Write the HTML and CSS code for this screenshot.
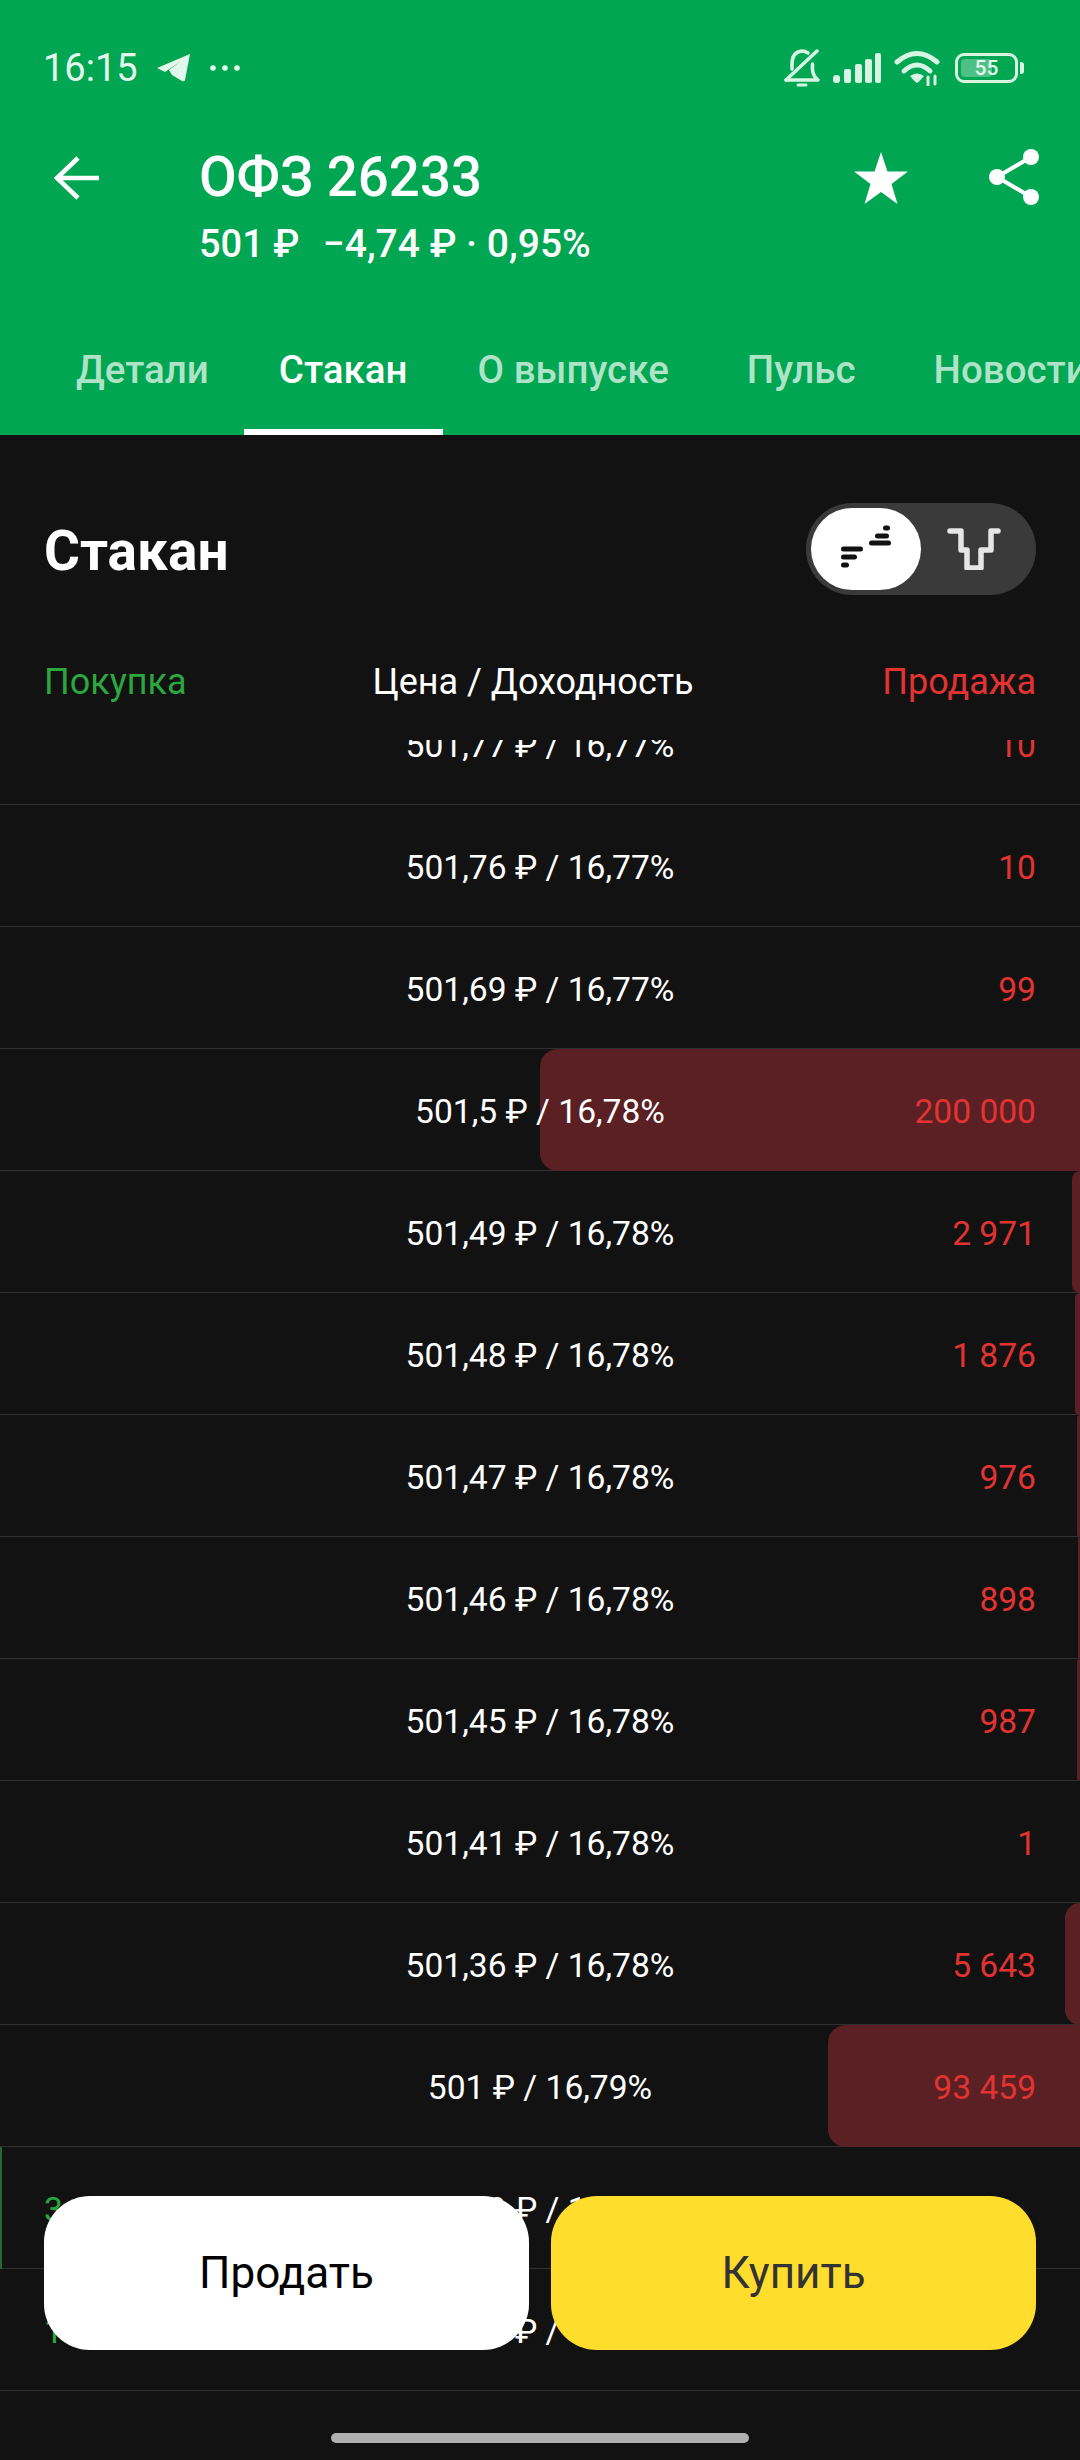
FILE: index.html
```html
<!DOCTYPE html>
<html lang="ru">
<head>
  <meta charset="UTF-8" />
  <title>ОФЗ 26233</title>
  <link rel="stylesheet" href="styles.css">
</head>
<body>
<div class="page">

  <header class="header">
    <div class="statusbar">
      <span class="time">16:15</span>
      <svg class="tg" width="33" height="28" viewBox="0 0 33 28"><path d="M0 14 33 0 28 26Q27.500 28 25 27L15 21 12 16 24 7 8 18Z" fill="#e3f7ec"/></svg>
      <svg class="dots" width="30" height="6" viewBox="0 0 30 6"><g fill="#e3f7ec"><circle cx="3" cy="3" r="2.800"/><circle cx="15" cy="3" r="2.800"/><circle cx="27" cy="3" r="2.800"/></g></svg>
      <div class="status-icons">
        <svg width="36" height="38" viewBox="0 0 36 38" fill="none" stroke="#d8f5e4" stroke-width="3.500" stroke-linecap="round" stroke-linejoin="round">
          <path d="M2 31H34Q29 27 28.500 21V15M24 4Q21 2 18 2 8 3 8 15V20"/>
          <path d="M2 31 33 2"/>
          <path d="M14 36H22" stroke-width="3"/>
        </svg>
        <svg width="48" height="30" viewBox="0 0 48 30" fill="#d8f5e4"><rect y="22" width="7" height="8" rx="3"/><rect x="11" y="16" width="7" height="14" rx="2"/><rect x="22" y="11" width="7" height="19" rx="2"/><rect x="32" y="6" width="7" height="24" rx="2"/><rect x="42" width="6" height="30" rx="2"/></svg>
        <svg width="46" height="36" viewBox="0 0 46 36" fill="none" stroke="#d8f5e4" stroke-width="5" stroke-linecap="round">
          <path d="M3 12Q23-5 43 12"/>
          <path d="M10 21Q23 9 36 21"/>
          <path d="M16 26Q23 21 30 26 24 33 23 33 22 33 16 26Z" fill="#d8f5e4" stroke="none"/>
          <path d="M34 27V35M41 26V34" stroke-width="3"/>
        </svg>
        <div class="battery">
          <div class="battery-body"><span class="battery-fill"></span><span class="battery-num">55</span></div>
          <span class="battery-nub"></span>
        </div>
      </div>
    </div>

    <div class="appbar">
      <svg class="back" width="46" height="44" viewBox="0 0 46 44" fill="none" stroke="#fff" stroke-width="4.500"><path d="M45 22H4M24 2 3 22 24 42"/></svg>
      <div class="title-block">
        <div class="title">ОФЗ 26233</div>
        <div class="subtitle">501 ₽ <span class="change">−4,74 ₽ · 0,95%</span></div>
      </div>
      <svg class="star" width="54" height="52" viewBox="0 0 54 52"><path d="M27 0 33.500 19.500H54L37.500 32 43.500 52 27 40 10.500 52 16.500 32 0 19.500H20.500Z" fill="#fff"/></svg>
      <svg class="share" width="50" height="56" viewBox="0 0 50 56"><g fill="#fff"><circle cx="42" cy="8" r="8"/><circle cx="8" cy="28" r="8"/><circle cx="42" cy="48" r="8"/></g><path d="M42 8 8 28 42 48" fill="none" stroke="#fff" stroke-width="4"/></svg>
    </div>

    <nav class="tabs">
      <a class="tab">Детали</a>
      <a class="tab active">Стакан</a>
      <a class="tab">О выпуске</a>
      <a class="tab">Пульс</a>
      <a class="tab">Новости</a>
    </nav>
  </header>

  <section class="book-head">
    <h2>Стакан</h2>
    <div class="toggle">
      <div class="toggle-thumb">
        <svg width="52" height="48" viewBox="0 0 52 48" fill="none" stroke="#111" stroke-width="5" stroke-linecap="round"><path d="M3.500 24H20.500M3.500 32H14.500M3.500 40H6.500M31.500 18H48.500M37.500 11H46.500M45.500 3H47.500"/></svg>
      </div>
      <div class="toggle-off">
        <svg class="toggle-icon" width="54" height="42" viewBox="0 0 54 42" fill="none" stroke="#e6e6e6" stroke-width="5.500" stroke-linecap="round" stroke-linejoin="round"><path d="M3 3H14V22H20V40H34V22H44V3H51"/></svg>
      </div>
    </div>
  </section>

  <div class="columns">
    <span class="buy">Покупка</span>
    <span class="mid">Цена / Доходность</span>
    <span class="sell">Продажа</span>
  </div>

  <div class="book">
    <div class="rows">
      <div class="row"><span class="price">501,77 ₽ / 16,77%</span><span class="sell">10</span></div>
      <div class="row"><span class="price">501,76 ₽ / 16,77%</span><span class="sell">10</span></div>
      <div class="row"><span class="price">501,69 ₽ / 16,77%</span><span class="sell">99</span></div>
      <div class="row"><span class="bar" style="width:540px"></span><span class="price">501,5 ₽ / 16,78%</span><span class="sell">200 000</span></div>
      <div class="row"><span class="bar" style="width:8px"></span><span class="price">501,49 ₽ / 16,78%</span><span class="sell">2 971</span></div>
      <div class="row"><span class="bar" style="width:5px"></span><span class="price">501,48 ₽ / 16,78%</span><span class="sell">1 876</span></div>
      <div class="row"><span class="bar" style="width:3px"></span><span class="price">501,47 ₽ / 16,78%</span><span class="sell">976</span></div>
      <div class="row"><span class="bar" style="width:2px"></span><span class="price">501,46 ₽ / 16,78%</span><span class="sell">898</span></div>
      <div class="row"><span class="bar" style="width:3px"></span><span class="price">501,45 ₽ / 16,78%</span><span class="sell">987</span></div>
      <div class="row"><span class="price">501,41 ₽ / 16,78%</span><span class="sell">1</span></div>
      <div class="row"><span class="bar" style="width:15px"></span><span class="price">501,36 ₽ / 16,78%</span><span class="sell">5 643</span></div>
      <div class="row"><span class="bar" style="width:252px"></span><span class="price">501 ₽ / 16,79%</span><span class="sell">93 459</span></div>
      <div class="row"><span class="bar bar-buy" style="width:2px"></span><span class="buy">3 240</span><span class="price">500,99 ₽ / 16,79%</span></div>
      <div class="row"><span class="buy">1 000</span><span class="price">500,98 ₽ / 16,79%</span></div>
    </div>
  </div>

  <div class="actions">
    <button class="btn btn-sell">Продать</button>
    <button class="btn btn-buy">Купить</button>
  </div>
  <div class="homebar"></div>

</div>
</body>
</html>
```

FILE: styles.css
```css
body {
  margin: 0;
  font-family: Roboto, 'Noto Sans', sans-serif;
  background: #121212;
  color: #fff;
}

.page {
  position: relative;
  width: 1080px;
  height: 2460px;
  overflow: hidden;
  background: #121212;
}

/* green top part */
.header {
  height: 435px;
  background: #00a651;
  display: flex;
  flex-direction: column;
}

.statusbar {
  display: flex;
  align-items: center;
  height: 40px;
  margin-top: 48px;
  padding: 0 56px 0 43px;
  color: #e3f7ec;
}

.time {
  font-size: 38px;
}

.tg {
  margin-left: 19px;
}

.dots {
  margin-left: 20px;
}

.status-icons {
  margin-left: auto;
  display: flex;
  align-items: center;
  gap: 13px;
}

.battery {
  display: flex;
  align-items: center;
  gap: 2px;
  margin-left: 2px;
}

.battery-body {
  position: relative;
  width: 63px;
  height: 30px;
  box-sizing: border-box;
  border: 3px solid #d8f5e4;
  border-radius: 9px;
  display: flex;
  align-items: center;
  justify-content: center;
}

.battery-fill {
  position: absolute;
  left: 3px;
  top: 3px;
  bottom: 3px;
  width: 31px;
  border-radius: 4px;
  background: rgba(255, 255, 255, 0.3);
}

.battery-num {
  position: relative;
  font-size: 21px;
  font-weight: 500;
  color: #e3f7ec;
}

.battery-nub {
  width: 4px;
  height: 12px;
  border-radius: 0 3px 3px 0;
  background: #d8f5e4;
}

.appbar {
  display: flex;
  align-items: flex-start;
  margin-top: 56px;
  padding: 0 41px 0 54px;
}

.back {
  margin-top: 12px;
}

.title-block {
  margin-left: 99px;
  flex: 1;
}

.title {
  font-size: 54.600px;
  font-weight: 500;
  line-height: 66px;
}

.subtitle {
  font-size: 38px;
  font-weight: 500;
  line-height: 44px;
  margin-top: 12px;
}

.change {
  margin-left: 14px;
  font-size: 39px;
}

.star {
  margin-top: 8px;
}

.share {
  margin: 5px 0 0 81px;
}

.tabs {
  display: flex;
  margin-top: auto;
  padding-left: 41px;
  white-space: nowrap;
}

.tab {
  height: 88px;
  line-height: 46px;
  padding: 0 35px;
  font-size: 38.500px;
  font-weight: 500;
  color: rgba(255, 255, 255, 0.7);
  box-sizing: border-box;
}

.tab:nth-child(n+4) {
  margin-left: 8px;
}

.tab.active {
  color: #fff;
  border-bottom: 6px solid #fff;
}

/* order book */
.book-head {
  display: flex;
  align-items: center;
  justify-content: space-between;
  padding: 68px 44px 0;
}

.book-head h2 {
  margin: 3px 0 0;
  font-size: 55px;
  font-weight: 700;
}

.toggle {
  width: 230px;
  height: 92px;
  box-sizing: border-box;
  padding: 5px;
  border-radius: 46px;
  background: #3a3a3a;
  display: flex;
}

.toggle-thumb {
  width: 110px;
  border-radius: 41px;
  background: #fff;
  display: flex;
  align-items: center;
  justify-content: center;
}

.toggle-off {
  flex: 1;
  display: flex;
  align-items: center;
  justify-content: center;
}

.toggle-icon {
  margin-right: 5px;
}

.columns {
  display: grid;
  grid-template-columns: 1fr auto 1fr;
  align-items: center;
  height: 40px;
  margin-top: 66px;
  padding: 0 44px;
  font-size: 36px;
}

.columns .mid {
  margin-right: 14px;
}

.columns .sell {
  text-align: right;
}

.buy {
  color: #2aa83e;
}

.sell {
  color: #e23333;
}

.book {
  height: 1720px;
  margin-top: 39px;
  overflow: hidden;
}

.rows {
  margin-top: -57px;
}

.row {
  position: relative;
  height: 122px;
  box-sizing: border-box;
  border-bottom: 1px solid #303030;
  padding: 3px 44px 0;
  display: grid;
  grid-template-columns: 1fr auto 1fr;
  align-items: center;
  font-size: 33.600px;
}

.row .price {
  grid-column: 2;
  position: relative;
}

.row .sell {
  grid-column: 3;
  text-align: right;
  position: relative;
}

.row .buy {
  grid-column: 1;
  position: relative;
}

.bar {
  position: absolute;
  right: 0;
  top: 0;
  bottom: -1px;
  border-radius: 18px 0 0 18px;
  background: #5a2023;
}

.bar-buy {
  left: 0;
  right: auto;
  border-radius: 0;
  background: #1f6b34;
}

/* fixed buttons over the list */
.actions {
  position: absolute;
  left: 44px;
  right: 44px;
  top: 2196px;
  display: flex;
  gap: 22px;
}

.btn {
  flex: 1;
  height: 154px;
  border: none;
  border-radius: 46px;
  font-family: inherit;
  font-size: 44px;
}

.btn-sell {
  background: #fff;
  color: #000;
}

.btn-buy {
  background: #ffdd2d;
  color: #333;
}

.homebar {
  position: absolute;
  left: 331px;
  top: 2433px;
  width: 418px;
  height: 10px;
  border-radius: 5px;
  background: #b0b0b0;
}
```
